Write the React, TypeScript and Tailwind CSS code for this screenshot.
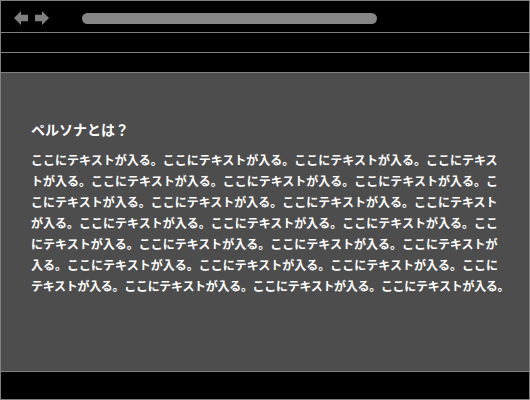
const LINES = [
  "ここにテキストが入る。ここにテキストが入る。ここにテキストが入る。ここにテキス",
  "トが入る。ここにテキストが入る。ここにテキストが入る。ここにテキストが入る。こ",
  "こにテキストが入る。ここにテキストが入る。ここにテキストが入る。ここにテキスト",
  "が入る。ここにテキストが入る。ここにテキストが入る。ここにテキストが入る。ここ",
  "にテキストが入る。ここにテキストが入る。ここにテキストが入る。ここにテキストが",
  "入る。ここにテキストが入る。ここにテキストが入る。ここにテキストが入る。ここに",
  "テキストが入る。ここにテキストが入る。ここにテキストが入る。ここにテキストが入る。",
];

function Arrow({ flip }: { flip?: boolean }) {
  return (
    <svg
      width="14"
      height="14"
      viewBox="0 0 13 13"
      className={flip ? "-scale-x-100" : ""}
    >
      <polygon
        points="0,6.5 6.5,0 6.5,3.5 13,3.5 13,9.5 6.5,9.5 6.5,13"
        fill="#7f7f7f"
      />
    </svg>
  );
}

export default function App() {
  return (
    <div
      className="flex h-[400px] w-[530px] flex-col border border-[#808080] bg-black"
      style={{ fontFamily: '"Noto Sans CJK JP", "Noto Sans", sans-serif' }}
    >
      {/* browser chrome */}
      <div className="flex h-[32px] shrink-0 items-center border-b border-[#808080]">
        <div className="ml-[13px] flex gap-[7px] pt-[3px]">
          <Arrow />
          <Arrow flip />
        </div>
        <div className="ml-[33px] mt-[3px] h-[11px] w-[295px] rounded-full bg-[#868686]" />
      </div>
      <div className="h-[20px] shrink-0 border-b border-[#808080]" />
      <div className="h-[20px] shrink-0 border-b border-[#808080]" />

      {/* content */}
      <div className="h-[299px] shrink-0 border-b border-[#808080] bg-[#4d4d4d] pl-[30px] pr-[29px] pt-[46px] text-white">
        <h2 className="text-[14px] font-bold leading-[20px]">ペルソナとは？</h2>
        <p className="mt-[10px] whitespace-nowrap text-[12px] font-bold leading-[21px]">
          {LINES.map((line, i) => (
            <span
              key={i}
              className={
                i === LINES.length - 1 ? "block tracking-[-0.3px]" : "block"
              }
            >
              {line}
            </span>
          ))}
        </p>
      </div>
      <div className="flex-1" />
    </div>
  );
}
